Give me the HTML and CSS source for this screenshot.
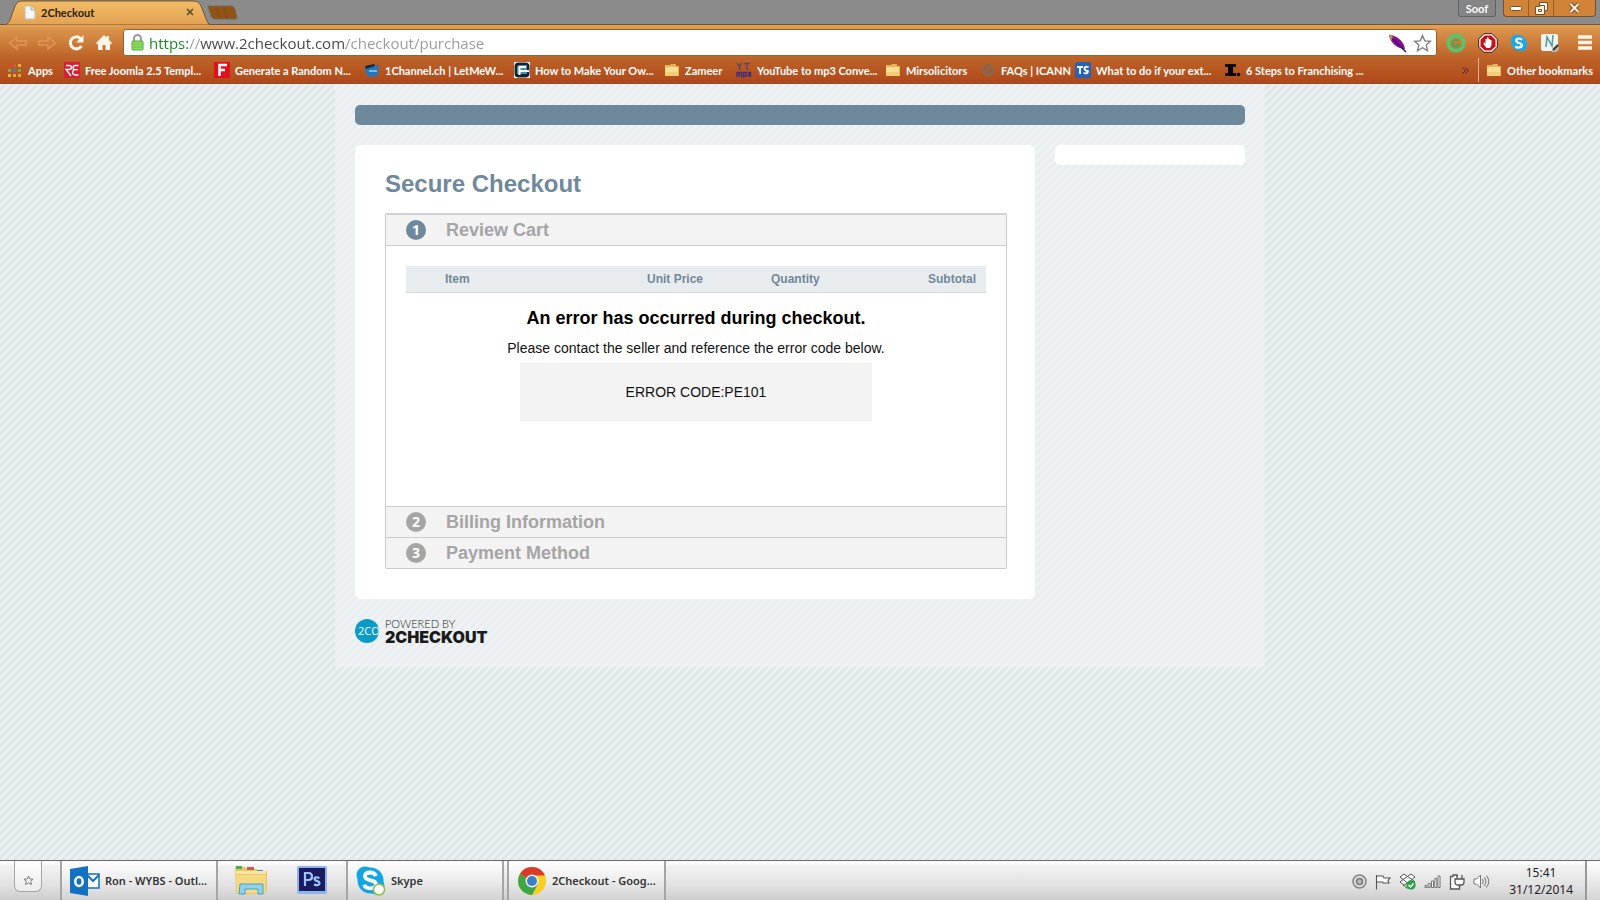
FILE: index.html
```html
<!DOCTYPE html>
<html lang="en">
<head>
<meta charset="utf-8">
<title>2Checkout</title>
<link rel="stylesheet" href="styles.css">
</head>
<body>
<div class="screen">
<header class="browser">
  <div class="tabstrip">
    <svg class="tabshape" width="212" height="25" viewBox="0 0 212 25"><defs><linearGradient id="tg" x1="0" y1="0" x2="0" y2="1"><stop offset="0" stop-color="#f3bd66"/><stop offset="1" stop-color="#e2a254"/></linearGradient></defs><path d="M0 25C7 25 8 24 10 20L15 6Q17 1 21 1H193Q199 1 201 6L207 21Q208 25 212 25Z" fill="url(#tg)" stroke="#74512f"/></svg>
    <div class="tab">
      <svg width="12" height="15" viewBox="0 0 12 15"><path d="M1 1h6l4 4v9H1z" fill="#f4f6fa" stroke="#c5bdb3"/><path d="M7 1v4h4" fill="#d9dee8" stroke="#b8b4b0"/></svg>
      <span class="tabname">2Checkout</span>
      <button class="plain" aria-label="Close tab"><svg width="8" height="8" viewBox="0 0 8 8"><path d="M1 1l6 6M7 1L1 7" stroke="#57502a" stroke-width="1.600"/></svg></button>
    </div>
    <button class="plain newtab" aria-label="New tab"><svg width="31" height="15" viewBox="0 0 31 15"><path d="M1 1h23q3 0 4 3l2 9q0 1-2 1H8q-3 0-4-3z" fill="#925414" stroke="#76675a"/><path d="M9 3l4 9M17 2l3 11" stroke="#845019" stroke-width="2"/></svg></button>
    <div class="winctl">
      <button class="user">Soof</button>
      <div class="winbtns">
        <button aria-label="Minimise"><svg width="12" height="5" viewBox="0 0 12 5"><rect x=".5" y=".5" width="11" height="4" rx="1" fill="#fff" stroke="#77502d"/></svg></button>
        <button aria-label="Restore"><svg width="13" height="13" viewBox="0 0 13 13"><path d="M4.500.5h8v8h-3v4h-9v-8h4z" fill="#fff2df" stroke="#70502f"/><path d="M3.500 7.500h3v2h-3zM5 3.500h4.500V8" fill="none" stroke="#70502f"/></svg></button>
        <button class="wide" aria-label="Close"><svg width="13" height="12" viewBox="0 0 13 12"><path d="M2.500 2l8 8M10.500 2l-8 8" stroke="#70502f" stroke-width="4"/><path d="M2.500 2l8 8M10.500 2l-8 8" stroke="#fff2df" stroke-width="2"/></svg></button>
      </div>
    </div>
  </div>
  <div class="toolbar">
    <nav class="navbtns">
      <button class="plain" aria-label="Back"><svg width="18" height="16" viewBox="0 0 18 16"><path d="M1 8l7-6v4h9v4H8v4z" fill="none" stroke="#dd9557" stroke-width="1.500"/></svg></button>
      <button class="plain" aria-label="Forward"><svg width="18" height="16" viewBox="0 0 18 16"><path d="M17 8l-7-6v4H1v4h9v4z" fill="none" stroke="#dd9557" stroke-width="1.500"/></svg></button>
      <button class="plain" aria-label="Reload"><svg width="18" height="18" viewBox="0 0 18 18"><path d="M13.500 4.500A6 6 0 1 0 14.500 12" fill="none" stroke="#fff5e8" stroke-width="3"/><path d="M16.500 1v7.500H9z" fill="#fff5e8"/></svg></button>
      <button class="plain" aria-label="Home"><svg width="16" height="17" viewBox="0 0 16 17"><path d="M8 1l2.500 2.500V2H13v4l3 3-1.500 1.500L14 10v6H9.500v-5h-3v5H2v-6l-.5.5L0 9z" fill="#fff5e8"/></svg></button>
    </nav>
    <div class="omnibox">
      <svg width="13" height="17" viewBox="0 0 13 17"><path d="M3 8V4.500a3.500 3.500 0 0 1 7 0V8" fill="none" stroke="#9a9c9a" stroke-width="2"/><rect x="1" y="7" width="11" height="9" rx="1" fill="#8edb63" stroke="#55a83c"/><path d="M2 10h9M2 13h9" stroke="#6bc646"/></svg>
      <input class="url" type="text" aria-label="Address" value="https://www.2checkout.com/checkout/purchase">
      <svg width="20" height="20" viewBox="0 0 20 20"><path d="M1 2C8 2 16 8 17 16 9 16 2 9 1 2z" fill="#8a0f86"/><path d="M1 1l5 4-3 2z" fill="#e39a32"/><path d="M4 5l14 14" stroke="#35118a" stroke-width="1.500"/></svg>
      <button class="plain" aria-label="Bookmark"><svg width="19" height="18" viewBox="0 0 19 18"><path d="M9.500 1.500l2.300 5.300 5.700.5-4.300 3.800 1.300 5.600-5-3-5 3 1.300-5.600L1.500 7.300l5.700-.5z" fill="#fff" stroke="#7b7b7b" stroke-width="1.300"/></svg></button>
    </div>
    <div class="exts">
      <button class="plain" aria-label="Grammar"><svg width="20" height="20" viewBox="0 0 20 20"><circle cx="10" cy="10" r="7.800" fill="none" stroke="#54c670" stroke-width="3.500"/><path d="M12.500 8a3.500 3.500 0 1 0 .5 4h-3" fill="none" stroke="#49a84e" stroke-width="2"/></svg></button>
      <button class="plain" aria-label="Ad blocker"><svg width="20" height="20" viewBox="0 0 20 20"><path d="M6 .7h8L19.300 6v8L14 19.300H6L.7 14V6z" fill="#fff" stroke="#4c1010"/><path d="M6.700 2.500h6.600l4.200 4.200v6.600l-4.200 4.200H6.700l-4.200-4.200V6.700z" fill="#c6101a"/><path d="M6 9l1.500 2V6H9V4.500h1.500V6H12v1h1.500v5L12 15H8.500L5.500 11z" fill="#fff"/></svg></button>
      <button class="plain" aria-label="Skype"><svg width="18" height="18" viewBox="0 0 18 18"><rect x="1" y="1" width="12" height="12" rx="5" fill="#18a9ea"/><rect x="5" y="5" width="12" height="12" rx="5" fill="#18a9ea"/><circle cx="9" cy="9" r="7.500" fill="#18a9ea"/><path d="M12 6Q11 4.500 9 4.500 6.300 4.500 6.300 6.500T9 9t2.800 2.300T9 13.500 5.800 12" fill="none" stroke="#fff" stroke-width="2.200"/></svg></button>
      <button class="plain" aria-label="Notes"><svg width="19" height="19" viewBox="0 0 19 19"><rect x="1" y="1" width="17" height="17" rx="2" fill="#f1f2f2"/><path d="M6 14l1-10 5 9 1-11" fill="none" stroke="#4d9aa0" stroke-width="1.500"/><path d="M18 11l-6 6v2h4l3-3z" fill="#b5b8ba"/><path d="M18 12l-5 5" stroke="#333" stroke-width="2"/></svg></button>
      <button class="plain menu" aria-label="Menu"><svg width="14" height="15" viewBox="0 0 14 15"><path d="M0 2h14M0 7.500h14M0 13h14" stroke="#fff5e8" stroke-width="3.500"/></svg></button>
    </div>
  </div>
  <nav class="bookmarks">
    <a href="#"><svg width="16" height="16" viewBox="0 0 16 16"><path d="M1 2h3v3H1zM6 7h3v3H6z" fill="#e2422e"/><path d="M6 2h3v3H6z" fill="#d65a3a"/><path d="M11 2h3v3h-3zM1 12h3v3H1z" fill="#eab13a"/><path d="M1 7h3v3H1zM11 7h3v3h-3z" fill="#6faf4b"/><path d="M6 7h3v3H6z" fill="#4a7ec0"/><path d="M6 12h3v3H6zM11 12h3v3h-3z" fill="#e9a42e"/></svg>Apps</a>
    <a href="#"><svg width="16" height="16" viewBox="0 0 16 16"><rect width="16" height="16" fill="#d61f35"/><path d="M2 3.500h3q2.500 0 2.500 2T5 7.500H2L7 14M14.500 3.500h-3q-2.500 0-2.500 2t2 2.200h3-3Q8.500 8.200 8.500 10.500t3 2.500h3" fill="none" stroke="#fff" stroke-width="1.300"/></svg>Free Joomla 2.5 Templ...</a>
    <a href="#"><svg width="16" height="16" viewBox="0 0 16 16"><rect width="16" height="16" fill="#e0101c"/><path d="M5.500 14V3H13M5.500 8H11" fill="none" stroke="#fff" stroke-width="2.500"/></svg>Generate a Random N...</a>
    <a href="#"><svg width="16" height="16" viewBox="0 0 16 16"><path d="M1 5l9-3 2 2 3-1-1 11-10 1-3-6z" fill="#2876b8"/><path d="M1 4l9-2 1 2-9 3z" fill="#172940"/><path d="M5 8h8v2H5z" fill="#78b9e4"/></svg>1Channel.ch | LetMeW...</a>
    <a href="#"><svg width="16" height="16" viewBox="0 0 16 16"><rect width="16" height="16" fill="#fff"/><rect x=".5" y=".5" width="15" height="15" rx="4" fill="#17222b"/><path d="M3 6q0-3 3-3h7v9H3z" fill="#4a90b5"/><path d="M5.500 13V5H12M5.500 9H15" fill="none" stroke="#fff" stroke-width="2"/></svg>How to Make Your Ow...</a>
    <a href="#"><svg width="16" height="16" viewBox="0 0 16 16"><use href="#folder"/></svg>Zameer</a>
    <a href="#"><svg width="16" height="16" viewBox="0 0 16 16"><path d="M1 1l2.500 3.500L6 1M3.500 4v4M8 1.500h5.500M10.800 1.500V8" fill="none" stroke="#5c4468" stroke-width="1.400"/><path d="M1 15v-4.500h4.500V15M3.200 10.500V15M7.500 16v-5.500H10V14H7.500M11.500 10.500h3V14h-3m.5-1.800h2.500" fill="none" stroke="#3a2f86" stroke-width="1.400"/></svg>YouTube to mp3 Conve...</a>
    <a href="#"><svg width="16" height="16" viewBox="0 0 16 16"><defs><g id="folder"><path d="M1 3h5l1-1h5v2h3v10H1z" fill="#e2b45b"/><path d="M1 5h13v9H1z" fill="#f8dd93"/><path d="M1 10h13v4H1z" fill="#f3cd76"/></g></defs><use href="#folder"/></svg>Mirsolicitors</a>
    <a href="#"><svg width="16" height="16" viewBox="0 0 16 16"><circle cx="8" cy="8" r="6.500" fill="#8b6a4c"/><path d="M4 8q2-5 7-3M5 11q6 1 7-5M5 7l5 3" fill="none" stroke="#a45a31" stroke-width="1.500"/></svg>FAQs | ICANN</a>
    <a href="#"><svg width="16" height="16" viewBox="0 0 16 16"><rect width="16" height="16" rx="2" fill="#2563b7"/><path d="M2 5h6M5 5v7M13.500 5.200Q9.500 3.800 9.500 6.300T13 9.200q0 3-4.500 1.800" fill="none" stroke="#fff" stroke-width="1.800"/></svg>What to do if your ext...</a>
    <a href="#"><svg width="16" height="16" viewBox="0 0 16 16"><path d="M0 2h11v3H8v6h3v3H0v-3h3V5H0z" fill="#090605"/><circle cx="13.500" cy="12.500" r="1.800" fill="#090605"/></svg>6 Steps to Franchising ...</a>
    <button class="plain more" aria-label="More bookmarks"><svg width="7" height="7" viewBox="0 0 7 7"><path d="M.5.5l3 3-3 3M3.500.5l3 3-3 3" fill="none" stroke="#3b1d10"/></svg></button>
    <a class="other" href="#"><svg width="16" height="16" viewBox="0 0 16 16"><use href="#folder"/></svg>Other bookmarks</a>
  </nav>
</header>

<main class="page">
  <div class="wrap">
    <div class="banner"></div>
    <div class="cols">
      <section class="card">
        <h1>Secure Checkout</h1>
        <div class="steps">
          <h2 class="step first"><span class="num on">1</span>Review Cart</h2>
          <div class="panel">
            <table class="cart">
              <thead><tr><th class="c-item">Item</th><th class="c-price">Unit Price</th><th>Quantity</th><th class="c-sub">Subtotal</th></tr></thead>
            </table>
            <h3>An error has occurred during checkout.</h3>
            <p>Please contact the seller and reference the error code below.</p>
            <div class="code">ERROR CODE:PE101</div>
          </div>
          <h2 class="step"><span class="num">2</span>Billing Information</h2>
          <h2 class="step"><span class="num">3</span>Payment Method</h2>
        </div>
      </section>
      <aside class="side"></aside>
    </div>
    <div class="brand">
      <span class="coin">2CO</span>
      <span class="brandtext"><span class="pow">POWERED BY</span><b>2CHECKOUT</b></span>
    </div>
  </div>
</main>

<footer class="taskbar">
  <div class="startcell"><button class="start" aria-label="Start"><svg width="11" height="11" viewBox="0 0 11 11"><path d="M5.500 1l1.300 3 3.200.3-2.400 2 .8 3.200-2.900-1.700-2.900 1.700.8-3.200L1 4.300 4.200 4z" fill="#fff" stroke="#777"/></svg></button></div>
  <button class="task w-a"><svg width="30" height="30" viewBox="0 0 30 30"><path d="M16 8h13v14H16z" fill="#fff" stroke="#1272c2" stroke-width="1.500"/><path d="M17 9l6 6 6-6" fill="none" stroke="#1272c2" stroke-width="2"/><path d="M0 3l18-3v30L0 27z" fill="#1272c2"/><ellipse cx="9" cy="15.500" rx="3.700" ry="4.500" fill="none" stroke="#fff" stroke-width="2.500"/></svg>Ron - WYBS - Outl...</button>
  <div class="pinned">
    <button class="plain" aria-label="File Explorer"><svg width="34" height="32" viewBox="0 0 34 32"><path d="M1 3h10l2 2h10l1 2h9v20l-3 3H2z" fill="#e9c665"/><path d="M2 2h6v3H2z" fill="#4caa5a"/><path d="M13 3h7v3h-7z" fill="#cc5b41"/><path d="M23 6h6v2h-6z" fill="#3c8bc9"/><path d="M2 7h30v3H2z" fill="#fbe7a5"/><path d="M2 11h30l-1 18H3z" fill="#f6da83"/><path d="M6 20h23v10h-5v-5H11v5H5z" fill="#8ed2ee" stroke="#469fc8"/></svg></button>
    <button class="plain" aria-label="Photoshop"><svg width="30" height="28" viewBox="0 0 30 28"><rect width="30" height="28" rx="2" fill="#8fb5e8"/><rect x="2" y="2" width="26" height="23" fill="#1a1b60"/><path d="M8 20V7h3.500q3.500 0 3.500 3.500T11.500 14H8M22.500 12q-5-1.800-5 .8 0 1.400 2.500 2.200t2.500 2.300q0 2.700-5.500 1.300" fill="none" stroke="#9cc6fb" stroke-width="2.200"/></svg></button>
  </div>
  <button class="task w-b"><svg width="30" height="30" viewBox="0 0 30 30"><circle cx="9" cy="9" r="8.500" fill="#12a5e3"/><circle cx="20" cy="20" r="8.500" fill="#12a5e3"/><circle cx="14.500" cy="14.500" r="13" fill="#12a5e3"/><path d="M20 10q-1.500-3.500-6-3.500-5 0-5 3.800 0 3 5.500 4t5.500 4q0 4-5.500 4-5 0-6.500-3.500" fill="none" stroke="#fff" stroke-width="3.800"/><circle cx="23" cy="23.500" r="5.500" fill="#fff" stroke="#8cbf3c" stroke-width="1.500"/></svg>Skype</button>
  <button class="task w-c"><svg width="30" height="30" viewBox="0 0 30 30"><circle cx="15" cy="15" r="14" fill="#f7cf27"/><path d="M15 15L2.900 8A14 14 0 0 1 28 9.500H15z" fill="#d93a2b"/><path d="M2.900 8A14 14 0 0 0 15 29l6-11-6-3z" fill="#3fa648"/><circle cx="15" cy="15" r="6.500" fill="#f4f4ee"/><circle cx="15" cy="15" r="5" fill="#3b7fc8"/></svg>2Checkout - Goog...</button>
  <div class="tray">
    <svg width="15" height="15" viewBox="0 0 15 15"><circle cx="7.500" cy="7.500" r="6.500" fill="#ddd" stroke="#858585" stroke-width="1.500"/><circle cx="7.500" cy="7.500" r="3" fill="#bbb" stroke="#777" stroke-width="1.500"/></svg>
    <svg width="16" height="16" viewBox="0 0 16 16"><path d="M1.500 1v14.500M2 2h6l1 2h6l-2 2.500 1 2.500H8L7.500 8H2" fill="#fff" stroke="#555" stroke-width="1.100"/></svg>
    <svg width="17" height="17" viewBox="0 0 17 17"><path d="M5 1l3.500 2.500L12 1l4 3-3 2.500L16 9l-4 3-3.500-2L5 12 1 9l3-2.500L1 4zM4 6.500l4.500-3L13 6.500 8.500 10zM4 12l4.500 3.500" fill="#fff" stroke="#555"/><circle cx="12" cy="12" r="4.700" fill="#27a343"/><path d="M9.500 12l2 2 3-3.500" fill="none" stroke="#fff" stroke-width="1.500"/></svg>
    <svg width="17" height="14" viewBox="0 0 17 14"><path d="M1 10.500h2v2H1zM4.200 8.500h2v4h-2zM7.500 6h2v6.500h-2zM10.800 3.500h2v9h-2zM14 1h2v11.500h-2z" fill="#fff" stroke="#666" stroke-width=".9"/></svg>
    <svg width="16" height="16" viewBox="0 0 16 16"><path d="M8 2.500V1H4v1.500H1.500v12.500h9V12" fill="#fff" stroke="#555" stroke-width="1.300"/><path d="M8 1v4M13 1v4M6 5h9v3q0 3-3 3H9q-3 0-3-3zM10.500 11v2" fill="#fff" stroke="#555" stroke-width="1.300"/></svg>
    <svg width="17" height="15" viewBox="0 0 17 15"><path d="M1 5h2.500L7.500 1v13L3.500 10H1z" fill="#fff" stroke="#777"/><path d="M9.500 5q1.500 2.500 0 5M11.500 3q3 4.500 0 9M13.500 1.500q4.500 6 0 12" fill="none" stroke="#777"/></svg>
  </div>
  <div class="clock"><span>15:41</span><span>31/12/2014</span></div>
  <button class="desk" aria-label="Show desktop"></button>
</footer>
</div>
</body>
</html>
```
FILE: styles.css
```css
* { box-sizing: border-box; }
body { margin: 0; font-family: "Liberation Sans", Arial, sans-serif; }
h1, h2, h3, p { margin: 0; }
button { font: inherit; border: 0; padding: 0; }
svg { display: block; flex: none; }
.plain { background: none; }
.screen {
  min-height: 100vh;
  display: flex;
  flex-direction: column;
  background: linear-gradient(135deg, #dde7ea 0 20%, #ebf2f1 30% 45%, #dde7ea 55% 70%, #ebf2f1 80% 95%, #dde7ea) 0 0 / 8px 8px;
}

/* Browser window */
.browser {
  font-family: Lato, "Open Sans", sans-serif;
  background: linear-gradient(#8b8b8b 0 24px, #e2a254 25px, #d9924a 30px, #bd6328 58px, #b1491a 82px, #8f4a2c 84px);
}
.tabstrip { height: 25px; display: flex; position: relative; border-bottom: 1px solid #74512f; }
.tabshape { position: absolute; left: 0; top: 0; }
.tab {
  position: relative;
  width: 207px;
  padding: 0 13px 0 24px;
  display: flex;
  align-items: center;
  gap: 5px;
  font-size: 11px;
  font-weight: 700;
  color: #2c1c0c;
}
.tabname { flex: 1; }
.newtab { align-self: center; }
.winctl { margin-left: auto; display: flex; gap: 7px; padding-right: 4px; }
.user {
  width: 38px;
  height: 17px;
  background: #858585;
  border: 1px solid #626262;
  border-top: 0;
  border-radius: 0 0 3px 3px;
  font-size: 11px;
  font-weight: 700;
  line-height: 18px;
  color: #fff;
}
.winbtns { display: flex; height: 17px; border: 1px solid #74512f; border-top: 0; border-radius: 0 0 4px 4px; background: #d18337; overflow: hidden; }
.winbtns button { width: 25px; background: none; display: grid; place-items: center; border-right: 1px solid #94602f; }
.winbtns .wide { width: 41px; border: 0; }
.toolbar { height: 33px; padding: 2px 8px 0 9px; display: flex; align-items: center; }
.navbtns { display: flex; align-items: center; gap: 11px; width: 114px; }
.omnibox {
  flex: 1;
  height: 27px;
  display: flex;
  align-items: center;
  gap: 5px;
  padding: 0 4px 0 7px;
  background: #fff;
  border: 1px solid #99602f;
  border-radius: 3px;
}
.url {
  flex: 1;
  min-width: 0;
  padding: 0;
  border: 0;
  outline: 0;
  font: 15px "Open Sans", sans-serif;
  color: transparent;
  background: linear-gradient(to right, #12891a 0 39px, #999 39px 51px, #444 51px 197px, #999 197px);
  -webkit-background-clip: text;
  background-clip: text;
}
.exts { display: flex; align-items: center; gap: 12px; width: 155px; padding-left: 9px; }
.menu { margin-left: auto; }
.bookmarks {
  height: 26px;
  padding: 0 8px 2px 7px;
  display: grid;
  grid-template-columns: 57px 150px 150px 150px 150px 72px 149px 95px 95px 150px 1fr 24px 114px;
  align-items: center;
  font-size: 11px;
  font-weight: 700;
}
.bookmarks a { display: flex; align-items: center; gap: 5px; color: #fff; text-decoration: none; white-space: nowrap; }
.bookmarks .other { border-left: 1px solid #ddb08e; padding-left: 7px; height: 24px; }
.more { justify-self: start; padding: 4px 8px; }

/* Checkout page */
.page { flex: 1; }
.wrap {
  max-width: 930px;
  margin: 0 auto;
  padding: 21px 20px 24px;
  background: rgba(243, 244, 246, .5);
}
.banner { height: 20px; border-radius: 5px; background: #6e899b; }
.cols { display: flex; gap: 20px; align-items: flex-start; margin-top: 20px; }
.card { flex: 1; padding: 24px 28px 30px 30px; border-radius: 6px; background: #fff; }
.side { width: 190px; height: 20px; border-radius: 5px; background: #fff; }
h1 { font-size: 24px; line-height: 30px; color: #6e899b; }
.steps { margin-top: 14px; border: 1px solid #ccc; border-top: 2px solid #d2d2d2; border-radius: 2px; }
.step {
  display: flex;
  align-items: center;
  gap: 20px;
  height: 31px;
  padding-left: 20px;
  font-size: 18px;
  color: #a5a5a5;
  background: #f3f3f3;
  border-top: 1px solid #ccc;
}
.first { border-top: 0; border-bottom: 1px solid #ccc; }
.num { width: 20px; height: 20px; border-radius: 50%; background: #a5a5a5; color: #fff; font: 700 14px/20px "Open Sans", sans-serif; text-align: center; }
.on { background: #6e899b; }
.panel { min-height: 260px; padding: 20px; text-align: center; }
.cart { width: 100%; border-collapse: collapse; table-layout: fixed; background: #e9ecee; border-bottom: 1px solid #d8d8d8; }
.cart th { height: 26px; padding: 0 10px; font-size: 12px; text-align: left; color: #6e899b; }
.cart .c-item { width: 231px; padding-left: 39px; }
.cart .c-price { width: 124px; }
.cart .c-sub { text-align: right; }
h3 { margin-top: 14px; font-size: 18px; line-height: 22px; color: #000; }
.panel p { margin-top: 10px; font-size: 14px; line-height: 18px; color: #111; }
.code { width: 352px; max-width: 100%; margin: 6px auto 0; background: #f3f3f3; font-size: 14px; line-height: 58px; color: #111; }
.brand { display: flex; align-items: center; gap: 6px; height: 24px; margin-top: 20px; }
.coin { width: 24px; height: 24px; padding-left: 3px; border-radius: 50%; background: #0a9cc8; color: #fff; font: 11px/24px "Open Sans", sans-serif; overflow: hidden; }
.brandtext { display: flex; flex-direction: column; color: #1b1b1b; }
.brandtext .pow { font: 300 11px/12px Lato, sans-serif; }
.brandtext b { font: 900 16px/14px Inter, sans-serif; }

/* Taskbar */
.taskbar {
  height: 40px;
  display: flex;
  align-items: stretch;
  font-family: "Noto Sans", sans-serif;
  border-top: 1px solid #6b6370;
  background: linear-gradient(#fff 0 3px, #f3f3f3 4px, #e2e2e2 24px, #cdcdcd);
}
.startcell { width: 60px; padding-left: 14px; }
.start { width: 28px; height: 31px; display: grid; place-items: center; padding-top: 8px; background: linear-gradient(#fff, #ececec); border: 1px solid #a5a5a5; border-top: 0; border-radius: 0 0 6px 6px; }
.task {
  display: flex;
  align-items: center;
  gap: 5px;
  padding-left: 8px;
  border-left: 2px solid #a5a5a5;
  border-right: 2px solid #a5a5a5;
  background: linear-gradient(#fff, #ececec 50%, #d2d2d2);
  font-size: 11px;
  font-weight: 600;
  color: #333;
  white-space: nowrap;
}
.w-a { width: 158px; }
.pinned { display: flex; align-items: center; gap: 29px; width: 128px; padding: 0 0 2px 16px; }
.w-b { width: 158px; }
.w-c { width: 159px; margin-left: 3px; }
.tray { margin-left: auto; display: flex; align-items: center; gap: 8px; padding: 2px 19px 0 0; }
.clock { display: flex; flex-direction: column; justify-content: center; text-align: center; font-size: 12px; line-height: 17px; color: #222; }
.desk { width: 15px; margin-left: 12px; border-left: 2px solid #999; background: linear-gradient(#fff, #d5d5d5); }
```
